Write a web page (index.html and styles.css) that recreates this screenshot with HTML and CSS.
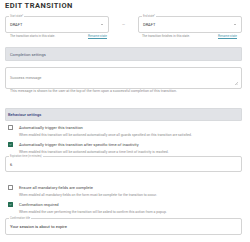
FILE: index.html
```html
<!DOCTYPE html>
<html>
<head>
<meta charset="utf-8">
<link rel="stylesheet" href="styles.css">
</head>
<body>
<div class="page">
  <h1 class="title">EDIT TRANSITION</h1>

  <div class="states">
    <div class="state">
      <div class="field select">
        <span class="float-label">Start state*</span>
        <span class="value">DRAFT</span>
        <span class="arrow"></span>
      </div>
      <div class="helper-row">
        <span>The transition starts in this state.</span>
        <a class="link">Rename state</a>
      </div>
    </div>
    <div class="dash">—</div>
    <div class="state">
      <div class="field select">
        <span class="float-label">End state*</span>
        <span class="value">DRAFT</span>
        <span class="arrow"></span>
      </div>
      <div class="helper-row">
        <span>The transition finishes in this state.</span>
        <a class="link">Rename state</a>
      </div>
    </div>
  </div>

  <div class="section-bar completion">Completion settings</div>

  <div class="field textarea">
    <span class="placeholder">Success message</span>
    <svg class="resize" width="4" height="4" viewBox="0 0 4 4"><path d="M4 1 L1 4 M4 2.5 L2.5 4" stroke="#999" stroke-width="0.5"/></svg>
  </div>
  <p class="helper pad">This message is shown to the user at the top of the form upon a successful completion of this transition.</p>

  <div class="section-bar behaviour">Behaviour settings</div>

  <div class="check-block first">
    <div class="check-row"><span class="box"></span><span>Automatically trigger this transition</span></div>
    <p class="helper indent">When enabled this transition will be actioned automatically once all guards specified on this transition are satisfied.</p>
  </div>
  <div class="check-block">
    <div class="check-row"><span class="box checked"><svg width="5" height="5" viewBox="0 0 10 10"><path d="M2 5.2 L4.2 7.3 L8.2 2.8" fill="none" stroke="#fff" stroke-width="1.6"/></svg></span><span>Automatically trigger this transition after specific time of inactivity</span></div>
    <p class="helper indent">When enabled this transition will be actioned automatically once a time limit of inactivity is reached.</p>
  </div>
  <div class="field input">
    <span class="float-label">Expiration time (in minutes)</span>
    <span class="value">6</span>
  </div>

  <div class="check-block second-group">
    <div class="check-row"><span class="box"></span><span>Ensure all mandatory fields are complete</span></div>
    <p class="helper indent">When enabled all mandatory fields on the form must be complete for the transition to occur.</p>
  </div>
  <div class="check-block">
    <div class="check-row"><span class="box checked"><svg width="5" height="5" viewBox="0 0 10 10"><path d="M2 5.2 L4.2 7.3 L8.2 2.8" fill="none" stroke="#fff" stroke-width="1.6"/></svg></span><span>Confirmation required</span></div>
    <p class="helper indent">When enabled the user performing the transition will be asked to confirm this action from a popup.</p>
  </div>
  <div class="field input last">
    <span class="float-label">Confirmation title</span>
    <span class="value dark">Your session is about to expire</span>
  </div>
</div>
</body>
</html>
```

FILE: styles.css
```css
* { box-sizing: border-box; }
html, body { margin: 0; padding: 0; background: #fff; }
body {
  font-family: Roboto, "Liberation Sans", sans-serif;
  color: #333;
}
.page {
  width: 242px;
  padding: 0 0 0 5px;
}
.title {
  margin: 0 0 4px 0;
  font-size: 7.5px;
  line-height: 12px;
  font-weight: 700;
  color: #333;
  letter-spacing: 0.45px;
}
.states {
  display: grid;
  grid-template-columns: 1fr 29px 1fr;
}
.dash {
  font-size: 4px;
  line-height: 17px;
  text-align: center;
  color: #888;
}
.field {
  position: relative;
  border: 1px solid #d4d4d4;
  border-radius: 2px;
  background: #fff;
  display: flex;
  align-items: center;
  padding: 0 4px;
}
.select { height: 17px; justify-content: space-between; }
.value {
  font-size: 4px;
  color: #444;
}
.value.dark { color: #333; font-size: 4.2px; }
.arrow {
  width: 0; height: 0;
  border-left: 1.2px solid transparent;
  border-right: 1.2px solid transparent;
  border-top: 1.3px solid #777;
  margin-right: 1px;
}
.float-label {
  position: absolute;
  top: -2px;
  left: 3px;
  padding: 0 1px;
  background: #fff;
  font-size: 2.6px;
  line-height: 3px;
  color: #999;
}
.helper-row {
  display: flex;
  justify-content: space-between;
  padding: 0 2px 0 5px;
  margin-top: 1px;
  font-size: 3.1px;
  line-height: 5px;
  color: #8a8a8a;
}
.states .state:last-child .helper-row { padding: 0 5px 0 4px; }
.link {
  color: #4c9aae;
  text-decoration: underline;
}
.section-bar {
  height: 14px;
  background: #e1e3e7;
  border: 1px solid #d8dadd;
  border-radius: 1px;
  display: flex;
  align-items: center;
  font-size: 4px;
}
.completion {
  margin-top: 8px;
  padding-left: 4px;
  color: #545c72;
}
.behaviour {
  margin-top: 14px;
  height: 13px;
  padding-left: 2px;
  color: #34427a;
  font-weight: 500;
}
.textarea {
  margin-top: 6px;
  height: 22px;
  align-items: flex-start;
  padding-top: 6.5px;
}
.placeholder {
  font-size: 3.9px;
  line-height: 5px;
  color: #8a8a8a;
}
.resize {
  position: absolute;
  right: 3px;
  bottom: 3px;
}
.helper {
  margin: 0;
  font-size: 3.4px;
  line-height: 6px;
  color: #8c8c8c;
  white-space: nowrap;
}
.helper.pad { padding-left: 5px; margin-top: 0; line-height: 5px; font-size: 3.6px; }
.check-block { margin-top: 2px; }
.check-block.first { margin-top: 2px; }
.check-block.second-group { margin-top: 11px; }
.check-row {
  display: flex;
  align-items: center;
  height: 8px;
  padding-left: 3px;
  font-size: 4.1px;
  color: #4a4a4a;
}
.box {
  width: 5px;
  height: 5px;
  border: 0.7px solid #8a8a8a;
  border-radius: 0.6px;
  margin-right: 6px;
  flex: none;
  display: flex;
  align-items: center;
  justify-content: center;
}
.box.checked {
  background: #236e52;
  border-color: #236e52;
}
.box svg { display: block; }
.helper.indent { padding-left: 14px; margin-top: 1px; }
.input {
  height: 16px;
  margin-top: 1px;
}
.input.last { margin-top: 3px; height: 17px; }
```
